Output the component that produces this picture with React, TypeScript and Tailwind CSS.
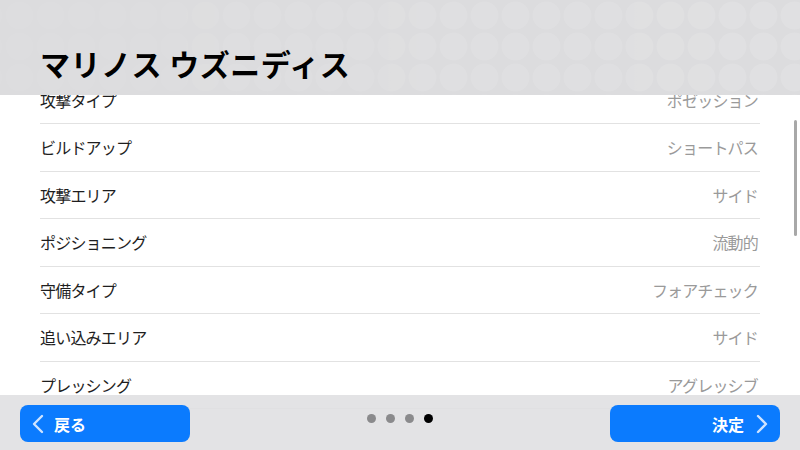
import React from 'react';

const rows: [string, string][] = [
  ['攻撃タイプ', 'ポゼッション'],
  ['ビルドアップ', 'ショートパス'],
  ['攻撃エリア', 'サイド'],
  ['ポジショニング', '流動的'],
  ['守備タイプ', 'フォアチェック'],
  ['追い込みエリア', 'サイド'],
  ['プレッシング', 'アグレッシブ'],
  ['ディフェンシブ戦術', ''],
];

const font = { fontFamily: '"Noto Sans CJK JP", "Noto Sans", sans-serif' };

const DotPattern = () => (
  <svg className="absolute inset-0 w-full h-full" aria-hidden>
    <defs>
      <pattern id="dots" x="4" y="0" width="31" height="31" patternUnits="userSpaceOnUse">
        <circle cx="15.5" cy="15.5" r="14" fill="#ffffff" />
      </pattern>
      <linearGradient id="fade" x1="0" y1="0" x2="1" y2="0">
        <stop offset="0" stopColor="#fff" stopOpacity="0.2" />
        <stop offset="0.6" stopColor="#fff" stopOpacity="0.6" />
        <stop offset="1" stopColor="#fff" stopOpacity="0.8" />
      </linearGradient>
      <mask id="m">
        <rect width="100%" height="100%" fill="url(#fade)" />
      </mask>
    </defs>
    <rect width="100%" height="100%" fill="url(#dots)" fillOpacity="0.16" mask="url(#m)" />
  </svg>
);

export default function App() {
  return (
    <div className="w-[800px] h-[450px] relative overflow-hidden bg-white flex flex-col" style={font}>
      {/* header */}
      <div className="relative h-[95px] shrink-0 bg-[#dcdcde] z-10">
        <DotPattern />
        <h1 className="relative pt-[43px] pl-[40px] text-[30px] leading-[40px] font-bold text-black tracking-[0.5px]">
          マリノス ウズニディス
        </h1>
      </div>

      {/* list */}
      <div className="relative flex-1 overflow-hidden">
        <div className="-mt-[18.5px] px-[40px]">
          {rows.map(([label, value], i) => (
            <div
              key={i}
              className="h-[47.5px] flex items-center justify-between border-b border-[#e2e2e2] text-[16px] tracking-[-0.8px]"
            >
              <span className="text-[#1e1e1e]">{label}</span>
              <span className="text-[#9a9a9a] pr-[2px]">{value}</span>
            </div>
          ))}
        </div>
        <div className="absolute right-[3px] top-[25px] w-[3px] h-[116px] rounded-full bg-[#a8a8a8]" />
      </div>

      {/* footer */}
      <div className="absolute left-0 bottom-0 w-full h-[55px] bg-[#e0e0e2]/[0.9] z-10 flex items-start justify-between px-[20px] pt-[10px]">
        <button className="w-[170px] h-[37px] rounded-[8px] bg-[#0b7bfe] flex items-center pl-[11px] gap-[9px] text-white font-bold text-[16px]">
          <svg width="14" height="22" viewBox="0 0 14 22" fill="none">
            <path d="M11 3 L3 11 L11 19" stroke="#cfe4ff" strokeWidth="2.4" strokeLinecap="round" strokeLinejoin="round" />
          </svg>
          <span>戻る</span>
        </button>
        <div className="flex gap-[10px] pt-[9px]">
          <span className="w-[9px] h-[9px] rounded-full bg-[#8a8a8c]" />
          <span className="w-[9px] h-[9px] rounded-full bg-[#8a8a8c]" />
          <span className="w-[9px] h-[9px] rounded-full bg-[#8a8a8c]" />
          <span className="w-[9px] h-[9px] rounded-full bg-black" />
        </div>
        <button className="w-[170px] h-[37px] rounded-[8px] bg-[#0b7bfe] flex items-center justify-end pr-[11px] gap-[11px] text-white font-bold text-[16px]">
          <span>決定</span>
          <svg width="14" height="22" viewBox="0 0 14 22" fill="none">
            <path d="M3 3 L11 11 L3 19" stroke="#cfe4ff" strokeWidth="2.4" strokeLinecap="round" strokeLinejoin="round" />
          </svg>
        </button>
      </div>
    </div>
  );
}
